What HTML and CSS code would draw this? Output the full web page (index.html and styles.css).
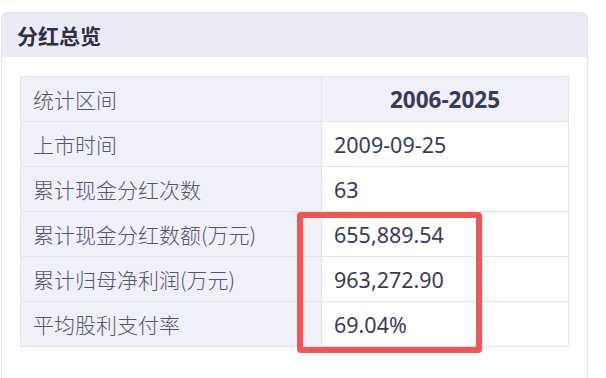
FILE: index.html
```html
<!DOCTYPE html>
<html lang="zh-CN">
<head>
<meta charset="utf-8">
<title>分红总览</title>
<link rel="stylesheet" href="styles.css">
</head>
<body>
<section class="card">
  <header class="card-head"><h2 class="card-title">分红总览</h2></header>
  <div class="card-body">
    <table class="summary">
      <tr class="head-row"><td class="label">统计区间</td><th class="value head">2006-2025</th></tr>
      <tr><td class="label">上市时间</td><td class="value">2009-09-25</td></tr>
      <tr><td class="label">累计现金分红次数</td><td class="value">63</td></tr>
      <tr><td class="label">累计现金分红数额(万元)</td><td class="value">655,889.54</td></tr>
      <tr><td class="label">累计归母净利润(万元)</td><td class="value">963,272.90</td></tr>
      <tr><td class="label">平均股利支付率</td><td class="value">69.04%</td></tr>
    </table>
  </div>
</section>
<div class="highlight"></div>
</body>
</html>
```
FILE: styles.css
```css
html, body {
  margin: 0;
  padding: 0;
  background: #ffffff;
}
body {
  position: relative;
  width: 606px;
  height: 378px;
  overflow: hidden;
  font-family: "Noto Sans", "Noto Sans CJK SC", sans-serif;
}
.card {
  margin: 12px 18px 0 1px;
  border: 1px solid #e5e5f0;
  border-bottom: none;
  border-radius: 6px 6px 0 0;
  height: 380px;
  box-sizing: border-box;
  background: #fff;
}
.card-head {
  height: 44px;
  background: #ebebf5;
  border-radius: 5px 5px 0 0;
  display: flex;
  align-items: center;
  padding-left: 15px;
}
.card-title {
  margin: 0;
  font-size: 21px;
  font-weight: 700;
  color: #2e2e44;
  font-family: "Noto Sans CJK SC", sans-serif;
  line-height: 1;
}
.card-body {
  padding: 19px 18px 0 18px;
}
.summary {
  width: 549px;
  border-collapse: collapse;
  table-layout: fixed;
}
.summary td, .summary th {
  height: 45px;
  box-sizing: border-box;
  border: 1px solid #e3e3ef;
  padding: 0 0 0 12px;
  text-align: left;
  vertical-align: middle;
}
.label {
  width: 301px;
  background: #f0f0f8;
  color: #55556f;
  font-size: 21px;
  font-family: "Noto Sans CJK SC", sans-serif;
  font-weight: 300;
}
.value {
  color: #3b3b58;
  font-size: 21.5px;
  font-family: "Noto Sans", "Noto Sans CJK SC", sans-serif;
}
.summary th.head {
  text-align: center;
  padding: 0;
  font-weight: 700;
  background: #f0f0f8;
  color: #3b3b58;
  font-size: 22.5px;
}
.highlight {
  position: absolute;
  left: 297px;
  top: 212px;
  width: 185px;
  height: 141px;
  box-sizing: border-box;
  border: 6px solid #f55454;
  border-radius: 4px;
}
```
